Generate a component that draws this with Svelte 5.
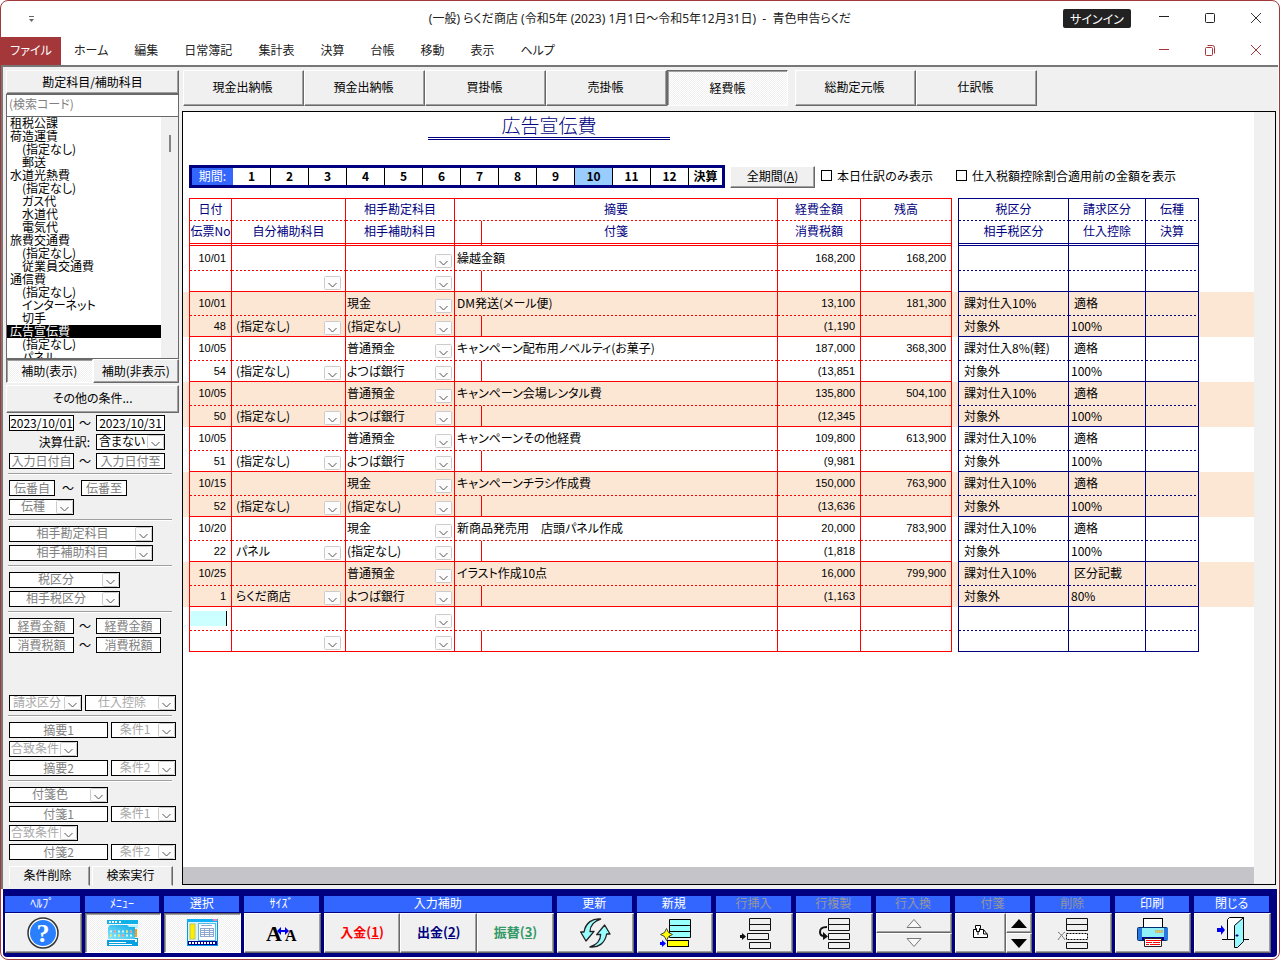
<script>
  const menus = ["ホーム", "編集", "日常簿記", "集計表", "決算", "台帳", "移動", "表示", "ヘルプ"];
  const books = ["現金出納帳", "預金出納帳", "買掛帳", "売掛帳", "経費帳"];
  const ledgers = ["総勘定元帳", "仕訳帳"];
  const months = ["1", "2", "3", "4", "5", "6", "7", "8", "9", "10", "11", "12", "決算"];

  let book = "経費帳";
  let month = "10";
  let account = "広告宣伝費";

  // sub: indented sub account
  const accounts = [
    { name: "租税公課" },
    { name: "荷造運賃" },
    { name: "(指定なし)", sub: true },
    { name: "郵送", sub: true },
    { name: "水道光熱費" },
    { name: "(指定なし)", sub: true },
    { name: "ガス代", sub: true },
    { name: "水道代", sub: true },
    { name: "電気代", sub: true },
    { name: "旅費交通費" },
    { name: "(指定なし)", sub: true },
    { name: "従業員交通費", sub: true },
    { name: "通信費" },
    { name: "(指定なし)", sub: true },
    { name: "インターネット", sub: true },
    { name: "切手", sub: true },
    { name: "広告宣伝費" },
    { name: "(指定なし)", sub: true },
    { name: "パネル", sub: true },
  ];

  const input = (label, size, value = "") => ({ type: "input", label, size, value });
  const select = (label, size, tone = "") => ({ type: "select", label, size, tone });
  const text = (label, size = "") => ({ type: "text", label, size });

  const upper = [
    [
      [input("開始日", "sm", "2023/10/01"), text("～"), input("終了日", "md", "2023/10/31")],
      [text("決算仕訳:", "caption"), select("含まない", "md", "dark")],
      [input("入力日付自", "sm"), text("～"), input("入力日付至", "md")],
    ],
    [
      [input("伝番自", "xs"), text("～", "wide"), input("伝番至", "xs")],
      [select("伝種", "sm")],
    ],
    [[select("相手勘定科目", "xxl")], [select("相手補助科目", "xxl")]],
    [[select("税区分", "xl")], [select("相手税区分", "xl")]],
    [
      [input("経費金額", "sm"), text("～"), input("経費金額", "sm")],
      [input("消費税額", "sm"), text("～"), input("消費税額", "sm")],
    ],
  ];

  const lower = [
    [[select("請求区分", "ms", "pale"), select("仕入控除", "ml", "pale")]],
    [
      [input("摘要1", "lg"), select("条件1", "sm", "pale")],
      [select("合致条件", "md", "pale")],
      [input("摘要2", "lg"), select("条件2", "sm", "pale")],
    ],
    [
      [select("付箋色", "lg")],
      [input("付箋1", "lg"), select("条件1", "sm", "pale")],
      [select("合致条件", "md", "pale")],
      [input("付箋2", "lg"), select("条件2", "sm", "pale")],
    ],
  ];

  const entries = [
    { date: "10/01", no: "", own: "", acct: "", sub: "", memo: "繰越金額", amount: "168,200", tax: "", balance: "168,200", kind: "", other: "", invoice: "", rate: "" },
    { date: "10/01", no: "48", own: "(指定なし)", acct: "現金", sub: "(指定なし)", memo: "DM発送(メール便)", amount: "13,100", tax: "(1,190", balance: "181,300", kind: "課対仕入10%", other: "対象外", invoice: "適格", rate: "100%" },
    { date: "10/05", no: "54", own: "(指定なし)", acct: "普通預金", sub: "よつば銀行", memo: "キャンペーン配布用ノベルティ(お菓子)", amount: "187,000", tax: "(13,851", balance: "368,300", kind: "課対仕入8%(軽)", other: "対象外", invoice: "適格", rate: "100%" },
    { date: "10/05", no: "50", own: "(指定なし)", acct: "普通預金", sub: "よつば銀行", memo: "キャンペーン会場レンタル費", amount: "135,800", tax: "(12,345", balance: "504,100", kind: "課対仕入10%", other: "対象外", invoice: "適格", rate: "100%" },
    { date: "10/05", no: "51", own: "(指定なし)", acct: "普通預金", sub: "よつば銀行", memo: "キャンペーンその他経費", amount: "109,800", tax: "(9,981", balance: "613,900", kind: "課対仕入10%", other: "対象外", invoice: "適格", rate: "100%" },
    { date: "10/15", no: "52", own: "(指定なし)", acct: "現金", sub: "(指定なし)", memo: "キャンペーンチラシ作成費", amount: "150,000", tax: "(13,636", balance: "763,900", kind: "課対仕入10%", other: "対象外", invoice: "適格", rate: "100%" },
    { date: "10/20", no: "22", own: "パネル", acct: "現金", sub: "(指定なし)", memo: "新商品発売用　店頭パネル作成", amount: "20,000", tax: "(1,818", balance: "783,900", kind: "課対仕入10%", other: "対象外", invoice: "適格", rate: "100%" },
    { date: "10/25", no: "1", own: "らくだ商店", acct: "普通預金", sub: "よつば銀行", memo: "イラスト作成10点", amount: "16,000", tax: "(1,163", balance: "799,900", kind: "課対仕入10%", other: "対象外", invoice: "区分記載", rate: "80%" },
    { date: null, no: "", own: "", acct: "", sub: "", memo: "", amount: "", tax: "", balance: "", kind: "", other: "", invoice: "", rate: "" },
  ];
</script>

{#snippet conditions(groups)}
  {#each groups as rows, i}
    {#if i > 0}<hr />{/if}
    <div class="group">
      {#each rows as row}
        <div class="line">
          {#each row as f}
            {#if f.type === "text"}
              <span class="mark {f.size}">{f.label}</span>
            {:else if f.type === "input"}
              <input class="field {f.size}" type="text" aria-label={f.label} placeholder={f.label} value={f.value} />
            {:else}
              <select class="field drop {f.size} {f.tone}" aria-label={f.label}><option>{f.label}</option></select>
            {/if}
          {/each}
        </div>
      {/each}
    </div>
  {/each}
{/snippet}

{#snippet pick(label, value)}
  <select class="pick drop" aria-label={label}><option>{value}</option></select>
{/snippet}

<div class="window">
  <header class="titlebar">
    <span class="quick">
      <svg width="7" height="8" viewBox="0 0 7 8"><path d="M1 1.500h5" stroke="#666" /><path d="M1 4h5L3.500 7z" fill="#666" /></svg>
    </span>
    <h1>(一般) らくだ商店 (令和5年 (2023) 1月1日～令和5年12月31日)&nbsp; -&nbsp; 青色申告らくだ</h1>
    <div class="controls">
      <button class="signin">サインイン</button>
      <button class="ctl" aria-label="最小化"><svg width="12" height="12"><path d="M1 3.500h10" stroke="#222" /></svg></button>
      <button class="ctl" aria-label="最大化"><svg width="12" height="12"><rect x="1.500" y="0.500" width="9" height="9" rx="1" fill="none" stroke="#222" /></svg></button>
      <button class="ctl" aria-label="閉じる"><svg width="12" height="12"><path d="M1 0l10 10M11 0L1 10" stroke="#333" /></svg></button>
    </div>
  </header>

  <nav class="menubar">
    <button class="file">ファイル</button>
    {#each menus as m}
      <button class="menu">{m}</button>
    {/each}
    <div class="controls">
      <button class="ctl" aria-label="帳簿を最小化"><svg width="12" height="12"><path d="M1 4.500h10" stroke="#a4373a" /></svg></button>
      <button class="ctl" aria-label="帳簿を元に戻す"><svg width="12" height="12"><rect x="1.500" y="2.500" width="7" height="8" rx="1" fill="none" stroke="#a4373a" /><path d="M3.500 0.500h5a2 2 0 0 1 2 2v6" fill="none" stroke="#a4373a" /></svg></button>
      <button class="ctl" aria-label="帳簿を閉じる"><svg width="12" height="12"><path d="M1 0l10 10M11 0L1 10" stroke="#a4373a" /></svg></button>
    </div>
  </nav>

  <div class="work">
    <aside>
      <button class="raised head">勘定科目/補助科目</button>
      <input class="search" type="text" aria-label="検索コード" placeholder="(検索コード)" />
      <div class="listbox">
        <ul role="listbox" aria-label="勘定科目">
          {#each accounts as a}
            <li role="option" aria-selected={a.name === account} class:sub={a.sub} class:current={a.name === account}>{a.name}</li>
          {/each}
        </ul>
        <div class="track"><div class="thumb"></div></div>
      </div>
      <div class="toggle">
        <button class="raised sunken">補助(表示)</button>
        <button class="raised">補助(非表示)</button>
      </div>
      <button class="raised more">その他の条件...</button>
      <div class="conditions">{@render conditions(upper)}</div>
      <div class="conditions lower">{@render conditions(lower)}</div>
      <div class="actions">
        <button class="raised">条件削除</button>
        <button class="raised">検索実行</button>
      </div>
    </aside>

    <main>
      <div class="tabs">
        <div class="tabset">
          {#each books as b}
            <button class="raised tab" class:sunken={b === book} on:click={() => (book = b)}>{b}</button>
          {/each}
        </div>
        <div class="tabset">
          {#each ledgers as b}
            <button class="raised tab" class:sunken={b === book} on:click={() => (book = b)}>{b}</button>
          {/each}
        </div>
      </div>

      <section class="sheet">
        <div class="paper">
          <h2>広告宣伝費</h2>
          <div class="filters">
            <div class="period">
              <span>期間:</span>
              {#each months as m}
                <button class:on={m === month} on:click={() => (month = m)}>{m}</button>
              {/each}
            </div>
            <button class="raised all">全期間(<u>A</u>)</button>
            <label class="today"><input type="checkbox" />本日仕訳のみ表示</label>
            <label><input type="checkbox" />仕入税額控除割合適用前の金額を表示</label>
          </div>

          <table>
            <colgroup>
              <col class="c-edge" /><col class="c-date" /><col class="c-own" /><col class="c-acct" />
              <col class="c-tag" /><col class="c-memo" /><col class="c-amount" /><col class="c-balance" />
              <col class="c-gap" /><col class="c-kind" /><col class="c-invoice" /><col class="c-type" /><col />
            </colgroup>
            <thead>
              <tr class="top">
                <td class="none"></td>
                <th>日付</th><th></th><th>相手勘定科目</th><th colspan="2">摘要</th><th>経費金額</th><th>残高</th>
                <td class="gap"></td>
                <th class="tax">税区分</th><th class="tax">請求区分</th><th class="tax">伝種</th>
                <td class="end"></td>
              </tr>
              <tr class="bottom">
                <td class="none"></td>
                <th>伝票No</th><th>自分補助科目</th><th>相手補助科目</th><th></th><th class="tagged">付箋</th><th>消費税額</th><th></th>
                <td class="gap"></td>
                <th class="tax">相手税区分</th><th class="tax">仕入控除</th><th class="tax">決算</th>
                <td class="end"></td>
              </tr>
            </thead>
            <tbody>
              {#each entries as e, i}
                <tr class="upper" class:band={i % 2 === 1 && e.date}>
                  <td class="none"></td>
                  <td class="num">
                    {#if e.date === null}<input class="entry" type="text" aria-label="日付" />{:else}{e.date}{/if}
                  </td>
                  <td></td>
                  <td>{@render pick("相手勘定科目", e.acct)}</td>
                  <td class="memo" colspan="2">{e.memo}</td>
                  <td class="num">{e.amount}</td>
                  <td class="num">{e.balance}</td>
                  <td class="gap"></td>
                  <td class="tax">{e.kind}</td>
                  <td class="tax">{e.invoice}</td>
                  <td class="tax"></td>
                  <td class="end"></td>
                </tr>
                <tr class="under" class:band={i % 2 === 1 && e.date}>
                  <td class="none"></td>
                  <td class="num">{e.no}</td>
                  <td class="own">{@render pick("自分補助科目", e.own)}</td>
                  <td>{@render pick("相手補助科目", e.sub)}</td>
                  <td></td>
                  <td></td>
                  <td class="num">{e.tax}</td>
                  <td></td>
                  <td class="gap"></td>
                  <td class="tax">{e.other}</td>
                  <td class="tax rate">{e.rate}</td>
                  <td class="tax"></td>
                  <td class="end"></td>
                </tr>
              {/each}
            </tbody>
          </table>
          <div class="hbar"></div>
        </div>
        <div class="gutter"></div>
      </section>
    </main>
  </div>

  <footer class="toolbar">
    <div class="tool">
      <h3>ﾍﾙﾌﾟ</h3>
      <button class="raised" aria-label="ヘルプ">
        <svg width="32" height="32" viewBox="0 0 32 32">
          <circle cx="16" cy="16" r="15" fill="#fff" stroke="#333" stroke-width="1.500" />
          <circle cx="16" cy="16" r="13" fill="#2a7fff" />
          <text x="16" y="25" text-anchor="middle" class="question">?</text>
        </svg>
      </button>
    </div>
    <div class="tool">
      <h3>ﾒﾆｭｰ</h3>
      <button class="raised sunken" aria-label="メニュー">
        <svg width="32" height="27" viewBox="0 0 32 27">
          <defs><linearGradient id="sky" x1="0" x2="1" y1="1" y2="0"><stop offset="0" stop-color="#8ee8f8" /><stop offset="1" stop-color="#08a8e8" /></linearGradient></defs>
          <rect x="0" y="0" width="31" height="4" fill="#10b0e8" />
          <path d="M2 2h8M12 2h3" stroke="#fff" stroke-width="2" stroke-dasharray="2 1" />
          <path d="M1 5h30v3H1z" fill="#b8f0fc" />
          <path d="M3 5h17l2 2h6v12H1V8z" fill="url(#sky)" />
          <path d="M3 11.500h22M3 15.500h22" stroke="#d0f8ff" stroke-width="2" stroke-dasharray="2 2" />
          <path d="M7 11.500h2M15 15.500h2M23 11.500h2" stroke="#f09090" stroke-width="2" />
          <path d="M11 15.500h2M19 11.500h2M3 15.500h2" stroke="#e8e060" stroke-width="2" />
          <path d="M28 9h2v8h-2z" fill="#ff9d10" />
          <path d="M0 20h28v-2h3v8H0z" fill="#08a0e0" />
          <path d="M2 22h17v1H2zM2 24h23v1H2zM28 19h2v3h-2z" fill="#fff" />
        </svg>
      </button>
    </div>
    <div class="tool">
      <h3>選択</h3>
      <button class="raised sunken" aria-label="選択">
        <svg width="32" height="28" viewBox="0 0 32 28">
          <rect x="0.500" y="0.500" width="30" height="26" fill="#d8f4ff" stroke="#0098e8" />
          <rect x="0" y="0" width="31" height="3" fill="#10b0f8" />
          <rect x="26" y="0" width="4" height="2" fill="#ff80a8" />
          <rect x="3" y="5" width="5" height="15" fill="#ffee00" stroke="#b8c860" stroke-width="1" />
          <rect x="11.500" y="4.500" width="17" height="17" fill="#fff" stroke="#58b8e8" />
          <path d="M14 6.500h11M13 9.500h14M13 11.500h14M13 13.500h14M13 15.500h14M13 17.500h14M13.500 9v9M17.500 9v9M22.500 9v9M26.500 9v9" stroke="#90a8d0" fill="none" />
          <rect x="1" y="22" width="29" height="4" fill="#000090" />
          <path d="M2 24h27" stroke="#fff" stroke-width="2" stroke-dasharray="2 1" />
        </svg>
      </button>
    </div>
    <div class="tool">
      <h3>ｻｲｽﾞ</h3>
      <button class="raised" aria-label="サイズ">
        <svg width="32" height="24" viewBox="0 0 32 24">
          <text x="0" y="20" class="big-a">A</text>
          <text x="19" y="20" class="small-a">A</text>
          <path d="M11 10l4-4v3h4V6l4 4-4 4v-3h-4v3z" fill="#0000f0" />
        </svg>
      </button>
    </div>
    <div class="tool">
      <h3>入力補助</h3>
      <div class="row">
        <button class="raised in">入金(<u>1</u>)</button>
        <button class="raised out">出金(<u>2</u>)</button>
        <button class="raised move">振替(<u>3</u>)</button>
      </div>
    </div>
    <div class="tool">
      <h3>更新</h3>
      <button class="raised" aria-label="更新">
        <svg width="31" height="30" viewBox="0 0 93 90">
          <g fill="#98ffff" stroke="#222" stroke-width="4" stroke-linejoin="round">
            <path d="M62 3C38 0 17 14 12 42L2 42L18 69L42 40L30 41C30 24 42 9 62 3Z" />
            <path d="M62 3C38 0 17 14 12 42L2 42L18 69L42 40L30 41C30 24 42 9 62 3Z" transform="rotate(180 46 45)" />
          </g>
        </svg>
      </button>
    </div>
    <div class="tool">
      <h3>新規</h3>
      <button class="raised" aria-label="新規">
        <svg width="32" height="30" viewBox="0 0 32 30">
          <path d="M10.500 1.500h21v18h-21zM10.500 7.500h21M10.500 13.500h21" fill="#98ffff" stroke="#000" />
          <rect x="8.500" y="22.500" width="21" height="6" fill="#ff0" stroke="#000" />
          <path d="M7.500 10.500l2 4 4 2-4 2-2 4-2-4-4-2 4-2z" fill="#ff0" stroke="#444" />
          <path d="M1 24h2v-2l4 3.500-4 3.500v-2H1z" fill="#00f" />
        </svg>
      </button>
    </div>
    <div class="tool off">
      <h3>行挿入</h3>
      <button class="raised" aria-label="行挿入">
        <svg width="32" height="32" viewBox="0 0 32 32">
          <path d="M10.500 1.500h21v12h-21zM10.500 7.500h21M8.500 16.500h21v6h-21zM10.500 25.500h21v6h-21z" fill="none" stroke="#111" />
          <path d="M1 18h2v-2l4 3.500-4 3.500v-2H1z" fill="#111" />
        </svg>
      </button>
    </div>
    <div class="tool off">
      <h3>行複製</h3>
      <button class="raised" aria-label="行複製">
        <svg width="32" height="32" viewBox="0 0 32 32">
          <path d="M10.500 1.500h21v12h-21zM10.500 7.500h21M10.500 16.500h21v6h-21zM10.500 25.500h21v6h-21z" fill="none" stroke="#111" />
          <path d="M9 10C3 10 2 12 2 15s1 4 4 4" fill="none" stroke="#111" stroke-width="2" />
          <path d="M5 15l5 4.500-5 3.500z" fill="#111" />
        </svg>
      </button>
    </div>
    <div class="tool off">
      <h3>行入換</h3>
      <div class="stack">
        <button class="raised" aria-label="上の行と入換"><svg width="16" height="10"><path d="M1 9.500L8 1.500l7 8z" fill="#f8f8f8" stroke="#777" /></svg></button>
        <button class="raised" aria-label="下の行と入換"><svg width="16" height="10"><path d="M1 0.500L8 8.500l7-8z" fill="#f8f8f8" stroke="#777" /></svg></button>
      </div>
    </div>
    <div class="tool off">
      <h3>付箋</h3>
      <div class="row">
        <button class="raised" aria-label="付箋">
          <svg width="16" height="14" viewBox="0 0 16 14"><path d="M3 4.500H0.500v8h14v-3l-4-5H7M2.500 0.500h5v3h-1v3h-3v-3h-1zM5 6v4M10.500 5v4h4" fill="#fff" stroke="#000" /></svg>
        </button>
        <div class="stack">
          <button class="raised" aria-label="前の付箋"><svg width="16" height="9"><path d="M0 9L8 0l8 9z" fill="#000" /></svg></button>
          <button class="raised" aria-label="次の付箋"><svg width="16" height="9"><path d="M0 0l8 9 8-9z" fill="#000" /></svg></button>
        </div>
      </div>
    </div>
    <div class="tool off">
      <h3>削除</h3>
      <button class="raised" aria-label="削除">
        <svg width="32" height="32" viewBox="0 0 32 32">
          <path d="M9.500 1.500h21v12h-21zM9.500 7.500h21M9.500 25.500h21v6h-21z" fill="none" stroke="#111" />
          <rect x="9.500" y="16.500" width="21" height="6" fill="#fff" stroke="#000" stroke-dasharray="2 1" />
          <path d="M1 15c3 2 5 5 7 8M8 15c-3 2-5 5-7 8" fill="none" stroke="#777" />
        </svg>
      </button>
    </div>
    <div class="tool">
      <h3>印刷</h3>
      <button class="raised" aria-label="印刷">
        <svg width="32" height="30" viewBox="0 0 32 30">
          <rect x="6.500" y="0.500" width="19" height="10" fill="#fff" stroke="#000" />
          <rect x="0.500" y="9.500" width="30" height="13" rx="1" fill="#90f0f8" stroke="#003070" />
          <path d="M1 10h4v12H1zM27 10h4v12h-4z" fill="#2878e0" />
          <path d="M18 12h8v3h-8z" fill="#c0b890" />
          <path d="M19 13.500h6" stroke="#ffe800" stroke-dasharray="1 1" />
          <path d="M5 19h22v3H5z" fill="#000090" />
          <path d="M7.500 20.500h17v8h-17z" fill="#fff" stroke="#222" />
          <path d="M9 22.500h15M9 24.500h6M16 24.500h7M9 26.500h3M13 26.500h10" stroke="#f00" />
        </svg>
      </button>
    </div>
    <div class="tool">
      <h3>閉じる</h3>
      <button class="raised" aria-label="終了">
        <svg width="32" height="32" viewBox="0 0 32 32">
          <path d="M5 22.500h6M26 22.500h6" stroke="#000" />
          <path d="M10.500 22.500v-20l2-2h14v22z" fill="#fff" stroke="#000" />
          <path d="M17.500 8.500l9-8v24l-6 6h-3z" fill="#98f8ff" stroke="#000" />
          <path d="M0 11h4V8l4 5-4 5v-3H0z" fill="#0000f0" />
          <path d="M18.500 18.500h3M20 17v3" stroke="#000080" />
        </svg>
      </button>
    </div>
  </footer>
</div>

<style>
  :global(body) {
    margin: 0;
    background: #fff;
  }

  .window {
    --navy: #000080;
    --line: #f00;
    box-sizing: border-box;
    display: flex;
    flex-direction: column;
    min-height: 100vh;
    border: 1px solid #a4373a;
    border-radius: 8px;
    background: #fff;
    color: #000;
    font-family: "Noto Sans CJK JP", "Liberation Sans", sans-serif;
    font-size: 12px;
    line-height: 16px;
    font-feature-settings: "palt";
  }

  button, input, select {
    box-sizing: border-box;
    margin: 0;
    padding: 0;
    border: 0;
    border-radius: 0;
    background: none;
    color: inherit;
    font: inherit;
    font-feature-settings: inherit;
  }

  svg {
    display: block;
  }

  h1, h2, h3 {
    margin: 0;
    font-weight: 400;
  }

  /* title and menu */
  .titlebar {
    display: grid;
    grid-template-columns: 1fr auto 1fr;
    align-items: center;
    height: 35px;
  }

  .quick {
    padding-left: 27px;
  }

  h1 {
    font-family: "Noto Sans", "Noto Sans CJK JP", sans-serif;
    font-size: 12px;
    color: #222;
  }

  .controls {
    display: flex;
    justify-content: flex-end;
    align-items: center;
    margin-left: auto;
  }

  .signin {
    width: 68px;
    height: 19px;
    margin-right: 10px;
    border-radius: 2px;
    background: #222;
    color: #fff;
  }

  .ctl {
    display: flex;
    justify-content: center;
    align-items: center;
    width: 46px;
    height: 28px;
  }

  .menubar {
    display: flex;
    align-items: center;
    height: 29px;
  }

  .file {
    width: 60px;
    height: 28px;
    padding-bottom: 2px;
    background: #a4373a;
    color: #fff;
  }

  .menu {
    padding: 0 13px 2px;
    color: #222;
  }

  /* bevelled buttons */
  .raised {
    display: flex;
    justify-content: center;
    align-items: center;
    border: 1px solid;
    border-color: #fff #696969 #696969 #fff;
    background: #f0f0f0;
    box-shadow: inset -1px -1px #a0a0a0;
  }

  .sunken {
    border-color: #696969 #fff #fff #696969;
    background: repeating-conic-gradient(#fff 0 25%, #f0f0f0 0 50%) 0 0 / 2px 2px;
    box-shadow: inset 1px 1px #a0a0a0;
  }

  .work {
    flex: 1;
    display: flex;
    gap: 3px;
    margin-right: 1px;
    padding: 3px 2px 4px 3px;
    border-top: 2px solid #777;
    border-left: 2px solid #777;
    background: #f0f0f0;
  }

  /* sidebar */
  aside {
    flex: 0 0 173px;
    display: flex;
    flex-direction: column;
  }

  .head {
    height: 24px;
  }

  .search {
    height: 23px;
    padding: 0 2px 4px;
    border: 1px solid #696969;
    background: #fff;
  }

  .search::placeholder,
  .field::placeholder {
    color: #808080;
    opacity: 1;
  }

  .listbox {
    display: flex;
    height: 242px;
    border: solid #696969;
    border-width: 0 1px 1px;
    box-sizing: border-box;
  }

  ul {
    flex: 1;
    margin: 0;
    padding: 0;
    overflow: hidden;
    background: #fff;
    list-style: none;
    line-height: 11px;
  }

  li {
    height: 13px;
    padding-left: 3px;
    white-space: nowrap;
  }

  .sub {
    padding-left: 15px;
  }

  .current {
    background: #000;
    color: #fff;
  }

  .track {
    width: 17px;
    padding-top: 18px;
  }

  .thumb {
    width: 2px;
    height: 17px;
    margin: 0 auto;
    background: #858585;
  }

  .toggle,
  .actions {
    display: grid;
    grid-template-columns: 1fr 1fr;
    height: 24px;
  }

  .more {
    height: 28px;
    margin: 2px 0;
    padding-bottom: 2px;
  }

  .conditions {
    padding-left: 3px;
  }

  .lower {
    margin-top: 42px;
  }

  hr {
    width: 164px;
    height: 1px;
    margin: 4px 0 5px -1px;
    border: 0;
    border-top: 1px solid #a0a0a0;
    background: #fff;
  }

  .group {
    display: grid;
    gap: 3px;
  }

  .line {
    display: flex;
    height: 16px;
  }

  .mark {
    box-sizing: border-box;
    width: 22px;
    text-align: center;
    line-height: 15px;
    font-feature-settings: normal;
  }

  .mark.wide {
    width: 26px;
  }

  .mark.caption {
    width: 87px;
    padding-right: 6px;
    text-align: right;
  }

  .field {
    height: 16px;
    padding-bottom: 2px;
    border: 1px solid #000;
    background-color: #fff;
    text-align: center;
    line-height: 12px;
  }

  .field + .field {
    margin-left: 3px;
  }

  .drop {
    appearance: none;
    background-image: url("data:image/svg+xml,%3Csvg xmlns='http://www.w3.org/2000/svg' width='17' height='14'%3E%3Crect x='.5' y='.5' width='16' height='13' rx='1' fill='%23fcfcfc' stroke='%23ccc'/%3E%3Cpath d='M4.500 7l4 4 4-4' fill='none' stroke='%23555'/%3E%3C/svg%3E");
    background-repeat: no-repeat;
    background-position: right center;
  }

  .field.drop {
    padding-right: 17px;
    color: #808080;
  }

  .field.drop.dark {
    color: #000;
  }

  .field.drop.pale {
    color: #a8a8a8;
  }

  .xs { width: 46px; }
  .sm { width: 65px; }
  .md { width: 69px; }
  .ms { width: 73px; }
  .ml { width: 91px; }
  .lg { width: 99px; }
  .xl { width: 111px; }
  .xxl { width: 144px; }

  .actions {
    gap: 2px;
    height: 19px;
    margin: 6px 6px 0 3px;
  }

  .actions .raised {
    padding: 0 4px 2px 0;
    border-bottom-color: #f0f0f0;
    box-shadow: inset -1px 0 #a0a0a0;
  }

  /* ledger */
  main {
    flex: 1;
    min-width: 0;
    display: flex;
    flex-direction: column;
  }

  .tabs {
    display: flex;
    gap: 7px;
    margin-bottom: 5px;
    padding-left: 1px;
  }

  .tabset {
    display: flex;
  }

  .tab {
    width: 121px;
    height: 36px;
    padding: 0 2px 2px 0;
  }

  .tab.sunken {
    padding: 0;
  }

  .sheet {
    flex: 1;
    display: flex;
    border: 1px solid #000;
  }

  .paper {
    flex: 1;
    min-width: 0;
    display: flex;
    flex-direction: column;
    background: #fff;
  }

  .gutter {
    width: 21px;
  }

  h2 {
    width: 242px;
    margin-left: 245px;
    border-bottom: 3px double var(--navy);
    color: var(--navy);
    font-size: 19px;
    line-height: 25px;
    text-align: center;
    font-weight: 300;
  }

  .filters {
    display: flex;
    align-items: center;
    margin: 25px 0 10px 6px;
  }

  .period {
    display: flex;
    border: 3px solid var(--navy);
    line-height: 16px;
  }

  .period span {
    width: 41px;
    background: #36f;
    color: #fff;
    text-align: center;
  }

  .period button {
    width: 38px;
    height: 17px;
    padding-bottom: 1px;
    border-right: 1px solid #000;
    font-weight: 700;
  }

  .period button:last-child {
    width: 33px;
    border: 0;
  }

  .period .on {
    background: #9cf;
  }

  .all {
    width: 85px;
    height: 22px;
    margin: 0 6px 0 5px;
    padding-bottom: 2px;
  }

  label {
    display: flex;
    align-items: center;
    gap: 5px;
    padding-bottom: 2px;
    font-feature-settings: normal;
  }

  .today {
    margin-right: 23px;
  }

  label input {
    appearance: none;
    width: 11px;
    height: 11px;
    border: 1px solid #000;
    background: #fff;
  }

  table {
    width: 100%;
    table-layout: fixed;
    border-spacing: 0;
  }

  .c-edge { width: 6px; }
  .c-date { width: 42px; }
  .c-own { width: 114px; }
  .c-acct { width: 109px; }
  .c-tag { width: 27px; }
  .c-memo { width: 296px; }
  .c-amount { width: 83px; }
  .c-balance { width: 91px; }
  .c-gap { width: 7px; }
  .c-kind { width: 110px; }
  .c-invoice { width: 77px; }
  .c-type { width: 53px; }

  td, th {
    box-sizing: border-box;
    padding: 0;
    border-left: 1px solid var(--line);
    font-weight: 400;
    line-height: 16px;
    white-space: nowrap;
  }

  .tax,
  .end {
    --line: var(--navy);
  }

  th {
    padding-bottom: 2px;
    color: var(--navy);
  }

  .top > * {
    height: 23px;
    border-top: 1px solid var(--line);
  }

  .bottom > * {
    height: 25px;
    border-bottom: 3px double var(--line);
  }

  .tagged {
    padding-right: 27px;
  }

  .upper > * {
    height: 24px;
    padding-bottom: 2px;
  }

  .upper:first-child > * {
    height: 25px;
  }

  .under > * {
    height: 21px;
    padding-bottom: 1px;
    border-bottom: 1px solid var(--line);
  }

  .top > *,
  .upper > * {
    background: repeating-linear-gradient(90deg, var(--line) 0 2px, transparent 2px 4px) left bottom / 100% 1px no-repeat;
  }

  tr > .none,
  tr > .gap,
  tr > .end {
    border-top: 0;
    border-bottom: 0;
    background: none;
  }

  tr > .none {
    border-left: 0;
  }

  .band {
    background: #fce6d4;
  }

  .num {
    padding-right: 5px;
    font-family: "Liberation Sans", sans-serif;
    font-size: 11px;
    text-align: right;
  }

  .memo {
    padding-left: 2px;
  }

  td.tax {
    padding-left: 5px;
  }

  td.rate {
    padding-left: 2px;
  }

  .pick {
    display: block;
    width: 100%;
    height: 20px;
    padding-left: 1px;
    background-position: right 2px bottom;
  }

  .under .pick {
    height: 18px;
  }

  .own .pick {
    padding-left: 4px;
    background-position: right 4px bottom;
  }

  .entry {
    display: block;
    width: 37px;
    height: 15px;
    border-right: 1px solid #000;
    background: #cff;
    text-align: right;
  }

  .hbar {
    height: 17px;
    margin-top: auto;
    background: #c5c5c9;
  }

  /* function keys */
  .toolbar {
    display: grid;
    grid-template-columns: repeat(4, 1fr) 3fr repeat(9, 1fr);
    gap: 3px;
    margin: 0 2px 2px;
    padding: 7px 6px 4px 2px;
    border-radius: 0 0 4px 4px;
    background: var(--navy);
  }

  .tool {
    min-width: 0;
  }

  h3 {
    height: 16px;
    margin: 0 2px 1px 0;
    background: #36f;
    color: #fff;
    font-size: 12px;
    line-height: 14px;
    text-align: center;
  }

  .off h3 {
    color: #96969c;
  }

  .tool > .raised {
    width: 100%;
    height: 40px;
  }

  .row,
  .stack {
    display: flex;
    height: 40px;
  }

  .row > .raised {
    flex: 1;
    height: 40px;
    padding-bottom: 2px;
    font-size: 13px;
    font-weight: 700;
  }

  .stack {
    flex-direction: column;
  }

  .stack .raised {
    flex: 1;
  }

  .row .stack {
    width: 26px;
  }

  .in { color: #f00; }
  .out { color: var(--navy); }
  .move { color: #396; }

  .question {
    fill: #fff;
    font: 700 26px "Liberation Serif", serif;
  }

  .big-a {
    font: 700 22px "Liberation Serif", serif;
  }

  .small-a {
    font: 700 16px "Liberation Serif", serif;
  }
</style>
